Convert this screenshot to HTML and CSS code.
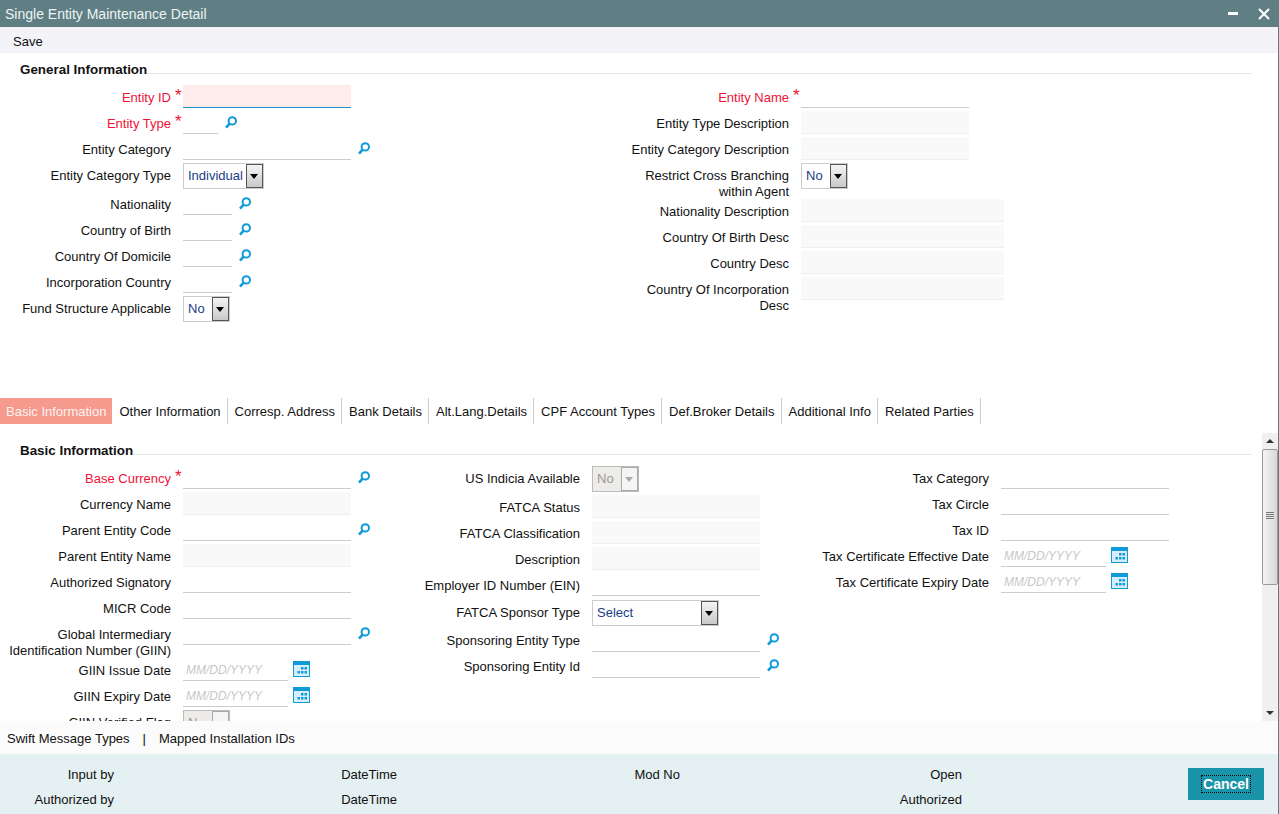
FILE: index.html
```html
<!DOCTYPE html>
<html lang="en">
<head>
<meta charset="utf-8">
<title>Single Entity Maintenance Detail</title>
<link rel="stylesheet" href="styles.css">
</head>
<body>
<svg class="defs" width="0" height="0" aria-hidden="true">
  <symbol id="i-search" viewBox="0 0 12 13"><circle cx="7.3" cy="4.9" r="3.7" fill="none" stroke="#109bd8" stroke-width="2"/><path d="M4.6 7.7 1 11.6" stroke="#109bd8" stroke-width="2.6" fill="none"/></symbol>
  <symbol id="i-cal" viewBox="0 0 17 16"><rect width="17" height="16" fill="#109bd8"/><rect x="1" y="4" width="15" height="11" fill="#d6eefa"/><path d="M8 6h2.500v2.500H8zM11.500 6H14v2.500h-2.500zM4.500 10H7v2.500H4.500zM8 10h2.500v2.500H8zM11.500 10H14v2.500h-2.500z" fill="#109bd8"/></symbol>
</svg>
<div class="window">
  <header class="titlebar">
    <span class="title">Single Entity Maintenance Detail</span>
    <span class="win-btns"><span class="min"></span><svg class="close" width="12" height="12" viewBox="0 0 12 12"><path d="M1 1l10 10M11 1 1 11" stroke="#fff" stroke-width="2"/></svg></span>
  </header>
  <nav class="toolbar">Save</nav>

  <section class="general">
    <h2 class="section-head">General Information</h2>
    <div class="cols">
      <div class="col">
        <div class="row"><label class="lbl req">Entity ID</label><span class="mark">*</span><input class="in w168 focus"></div>
        <div class="row"><label class="lbl req">Entity Type</label><span class="mark">*</span><input class="in w35"><svg class="ico"><use href="#i-search"/></svg></div>
        <div class="row"><label class="lbl">Entity Category</label><span class="mark"></span><input class="in w168"><svg class="ico"><use href="#i-search"/></svg></div>
        <div class="row tall"><label class="lbl">Entity Category Type</label><span class="mark"></span><div class="sel w81"><span class="sel-t">Individual</span><span class="sel-b"></span></div></div>
        <div class="row"><label class="lbl">Nationality</label><span class="mark"></span><input class="in w49"><svg class="ico"><use href="#i-search"/></svg></div>
        <div class="row"><label class="lbl">Country of Birth</label><span class="mark"></span><input class="in w49"><svg class="ico"><use href="#i-search"/></svg></div>
        <div class="row"><label class="lbl">Country Of Domicile</label><span class="mark"></span><input class="in w49"><svg class="ico"><use href="#i-search"/></svg></div>
        <div class="row"><label class="lbl">Incorporation Country</label><span class="mark"></span><input class="in w49"><svg class="ico"><use href="#i-search"/></svg></div>
        <div class="row"><label class="lbl">Fund Structure Applicable</label><span class="mark"></span><div class="sel w47"><span class="sel-t">No</span><span class="sel-b"></span></div></div>
      </div>
      <div class="col">
        <div class="row"><label class="lbl req">Entity Name</label><span class="mark">*</span><input class="in w168"></div>
        <div class="row"><label class="lbl">Entity Type Description</label><span class="mark"></span><input class="in w168 ro" readonly></div>
        <div class="row"><label class="lbl">Entity Category Description</label><span class="mark"></span><input class="in w168 ro" readonly></div>
        <div class="row double"><label class="lbl">Restrict Cross Branching<br>within Agent</label><span class="mark"></span><div class="sel w47"><span class="sel-t">No</span><span class="sel-b"></span></div></div>
        <div class="row"><label class="lbl">Nationality Description</label><span class="mark"></span><input class="in w203 ro" readonly></div>
        <div class="row"><label class="lbl">Country Of Birth Desc</label><span class="mark"></span><input class="in w203 ro" readonly></div>
        <div class="row"><label class="lbl">Country Desc</label><span class="mark"></span><input class="in w203 ro" readonly></div>
        <div class="row double"><label class="lbl">Country Of Incorporation<br>Desc</label><span class="mark"></span><input class="in w203 ro" readonly></div>
      </div>
    </div>
  </section>

  <ul class="tabs">
    <li class="tab active">Basic Information</li>
    <li class="tab">Other Information</li>
    <li class="tab">Corresp. Address</li>
    <li class="tab">Bank Details</li>
    <li class="tab">Alt.Lang.Details</li>
    <li class="tab">CPF Account Types</li>
    <li class="tab">Def.Broker Details</li>
    <li class="tab">Additional Info</li>
    <li class="tab">Related Parties</li>
  </ul>

  <div class="panel">
    <div class="panel-body">
      <h2 class="section-head">Basic Information</h2>
      <div class="cols">
        <div class="col">
          <div class="row"><label class="lbl req">Base Currency</label><span class="mark">*</span><input class="in w168"><svg class="ico"><use href="#i-search"/></svg></div>
          <div class="row"><label class="lbl">Currency Name</label><span class="mark"></span><input class="in w168 ro" readonly></div>
          <div class="row"><label class="lbl">Parent Entity Code</label><span class="mark"></span><input class="in w168"><svg class="ico"><use href="#i-search"/></svg></div>
          <div class="row"><label class="lbl">Parent Entity Name</label><span class="mark"></span><input class="in w168 ro" readonly></div>
          <div class="row"><label class="lbl">Authorized Signatory</label><span class="mark"></span><input class="in w168"></div>
          <div class="row"><label class="lbl">MICR Code</label><span class="mark"></span><input class="in w168"></div>
          <div class="row double"><label class="lbl">Global Intermediary<br>Identification Number (GIIN)</label><span class="mark"></span><input class="in w168"><svg class="ico"><use href="#i-search"/></svg></div>
          <div class="row"><label class="lbl">GIIN Issue Date</label><span class="mark"></span><input class="in w105" placeholder="MM/DD/YYYY"><svg class="cal"><use href="#i-cal"/></svg></div>
          <div class="row"><label class="lbl">GIIN Expiry Date</label><span class="mark"></span><input class="in w105" placeholder="MM/DD/YYYY"><svg class="cal"><use href="#i-cal"/></svg></div>
          <div class="row"><label class="lbl">GIIN Verified Flag</label><span class="mark"></span><div class="sel w47 off"><span class="sel-t">N</span><span class="sel-b"></span></div></div>
        </div>
        <div class="col">
          <div class="row tall"><label class="lbl">US Indicia Available</label><span class="mark"></span><div class="sel w47 off"><span class="sel-t">No</span><span class="sel-b"></span></div></div>
          <div class="row"><label class="lbl">FATCA Status</label><span class="mark"></span><input class="in w168 ro" readonly></div>
          <div class="row"><label class="lbl">FATCA Classification</label><span class="mark"></span><input class="in w168 ro" readonly></div>
          <div class="row"><label class="lbl">Description</label><span class="mark"></span><input class="in w168 ro" readonly></div>
          <div class="row mid"><label class="lbl">Employer ID Number (EIN)</label><span class="mark"></span><input class="in w168"></div>
          <div class="row tall-s"><label class="lbl">FATCA Sponsor Type</label><span class="mark"></span><div class="sel w127"><span class="sel-t">Select</span><span class="sel-b"></span></div></div>
          <div class="row"><label class="lbl">Sponsoring Entity Type</label><span class="mark"></span><input class="in w168 low"><svg class="ico"><use href="#i-search"/></svg></div>
          <div class="row"><label class="lbl">Sponsoring Entity Id</label><span class="mark"></span><input class="in w168 low"><svg class="ico"><use href="#i-search"/></svg></div>
        </div>
        <div class="col">
          <div class="row"><label class="lbl">Tax Category</label><span class="mark"></span><input class="in w168"></div>
          <div class="row"><label class="lbl">Tax Circle</label><span class="mark"></span><input class="in w168"></div>
          <div class="row"><label class="lbl">Tax ID</label><span class="mark"></span><input class="in w168"></div>
          <div class="row"><label class="lbl">Tax Certificate Effective Date</label><span class="mark"></span><input class="in w105" placeholder="MM/DD/YYYY"><svg class="cal"><use href="#i-cal"/></svg></div>
          <div class="row"><label class="lbl">Tax Certificate Expiry Date</label><span class="mark"></span><input class="in w105" placeholder="MM/DD/YYYY"><svg class="cal"><use href="#i-cal"/></svg></div>
        </div>
      </div>
    </div>
    <div class="scrollbar">
      <span class="sb-btn"><i class="up"></i></span>
      <span class="sb-thumb"><i class="grip"></i></span>
      <span class="sb-track"></span>
      <span class="sb-btn"><i class="down"></i></span>
    </div>
  </div>

  <div class="links"><span>Swift Message Types</span><span class="pipe">|</span><span>Mapped Installation IDs</span></div>

  <footer class="audit">
    <div class="audit-grid">
      <span>Input by</span><span>DateTime</span><span>Mod No</span><span>Open</span>
      <span>Authorized by</span><span>DateTime</span><span></span><span>Authorized</span>
    </div>
    <button class="cancel"><span class="cancel-t">Cancel</span></button>
  </footer>
</div>
</body>
</html>
```

FILE: styles.css
```css
* { box-sizing: border-box; }
html, body { margin: 0; height: 100%; overflow: hidden; background: #fff; }
body { font-family: "Liberation Sans", Arial, sans-serif; font-size: 13px; line-height: 16px; color: #111; }
.defs { display: block; height: 0; }

.window { display: flex; flex-direction: column; width: 1279px; height: 814px; border-right: 1px solid #5f7f84; }

.titlebar { flex: none; display: flex; align-items: center; justify-content: space-between; height: 27px; padding: 0 8px 0 5px; background: #5f7f84; color: #eef3f3; font-size: 14px; }
.win-btns { display: flex; align-items: center; gap: 20px; }
.min { width: 10px; height: 3px; background: #fff; margin-top: -1px; }
.close { display: block; }

.toolbar { flex: none; height: 26px; padding: 7px 0 0 13px; background: #f3f3f8; border-bottom: 1px solid #f0f0f2; }

.general { flex: none; height: 345px; }
.section-head { display: flex; margin: 0; padding: 9px 26px 0 20px; font-size: 13.4px; line-height: 16px; font-weight: bold; color: #111; height: 36px; }
.section-head::after { content: ""; flex: 1; height: 1px; margin-top: 11px; background: #e8e8e8; }

.cols { display: flex; }
.col { flex: none; width: 618px; }
.panel .col { width: 409px; }

.row { display: flex; align-items: flex-start; min-height: 26px; }
.row.tall { min-height: 29px; }
.row.mid { min-height: 27px; }
.row.tall-s { min-height: 28px; }
.row.double { min-height: 36px; }
.lbl { flex: none; width: 171px; padding-top: 1px; text-align: right; }
.lbl.req { color: #ee1238; }
.mark { flex: none; width: 12px; padding-left: 4px; color: #ee1238; font-size: 17px; line-height: 13px; }

.in { display: block; height: 23px; margin: -4px 0 0; padding: 0 3px; border: 0; border-bottom: 1px solid #ccc; background: #fff; font: inherit; outline: 0; }
.in::placeholder { color: #c8c8c8; font-style: italic; font-size: 12px; opacity: 1; }
.in.ro { background: #f9f9f9; border-bottom-color: #eee; }
.in.focus { background: #fdecea; border-bottom-color: #1a8fc8; }
.in.low { margin-top: -3px; }
.w35 { width: 35px; } .w49 { width: 49px; } .w105 { width: 105px; } .w168 { width: 168px; } .w203 { width: 203px; }
.w47 { width: 47px; } .w81 { width: 81px; } .w127 { width: 127px; }

.ico { flex: none; width: 12px; height: 13px; margin: 1px 0 0 7px; }
.cal { flex: none; width: 17px; height: 16px; margin: -1px 0 0 5px; }

.sel { flex: none; display: flex; height: 26px; margin-top: -4px; border: 1px solid #ccc; background: #fff; color: #1b3d86; }
.sel-t { flex: 1; padding: 4px 0 0 4px; }
.sel-b { position: relative; flex: none; width: 17px; border: 1px solid #555; background: linear-gradient(#f4f4f4, #c9c9c9); }
.sel-b::after { content: ""; position: absolute; left: 3px; top: 9px; border: 4px solid transparent; border-top: 5px solid #000; border-bottom: 0; }
.sel.off { background: #eeece8; color: #999; border-color: #bbb; }
.sel.off .sel-b { border-color: #aaa; background: #f5f5f5; }
.sel.off .sel-b::after { border-top-color: #aaa; }

.tabs { flex: none; display: flex; height: 26px; margin: 0; padding: 0; list-style: none; }
.tab { height: 26px; padding: 6px 6px 0 7px; border-right: 1px solid #ccc; white-space: nowrap; }
.tab.active { padding-left: 6px; background: #f59a8c; color: #fdf3f1; border-right: 0; }

.panel { flex: none; display: flex; height: 288px; margin-top: 9px; }
.panel-body { flex: 1; min-width: 0; overflow: hidden; padding-top: 1px; }
.panel .section-head { padding-right: 10px; }

.scrollbar { flex: none; display: flex; flex-direction: column; width: 16px; background: #f0f0f0; }
.sb-btn { flex: none; position: relative; height: 16px; background: #f0f0f0; }
.sb-btn i { position: absolute; left: 4px; top: 6px; border: 4px solid transparent; }
.sb-btn .up { border-bottom: 4px solid #333; border-top: 0; }
.sb-btn .down { border-top: 4px solid #333; border-bottom: 0; }
.sb-thumb { flex: none; position: relative; height: 136px; border: 1px solid #9a9a9a; border-radius: 2px; background: linear-gradient(90deg, #f4f4f4, #d8d8d8); }
.grip { position: absolute; left: 3px; top: 62px; width: 8px; height: 8px; background: repeating-linear-gradient(#777 0 1px, #e8e8e8 1px 2px); }
.sb-track { flex: 1; }

.links { flex: none; display: flex; height: 33px; padding: 10px 0 0 7px; background: #fbfbfb; }
.pipe { margin: 0 13px; }

.audit { flex: 1; display: flex; align-items: flex-start; justify-content: space-between; padding: 13px 14px 0 0; background: #e4f0f2; }
.audit-grid { display: grid; grid-template-columns: 114px 283px 283px 282px; grid-auto-rows: 25px; text-align: right; }
.cancel { width: 76px; height: 32px; margin-top: 1px; padding: 0; border: 0; background: #1a94a8; color: #fff; font: bold 14px "Liberation Sans", Arial, sans-serif; }
.cancel-t { display: inline-block; padding: 0 1px; border: 1px dotted #000; line-height: 16px; }
```
